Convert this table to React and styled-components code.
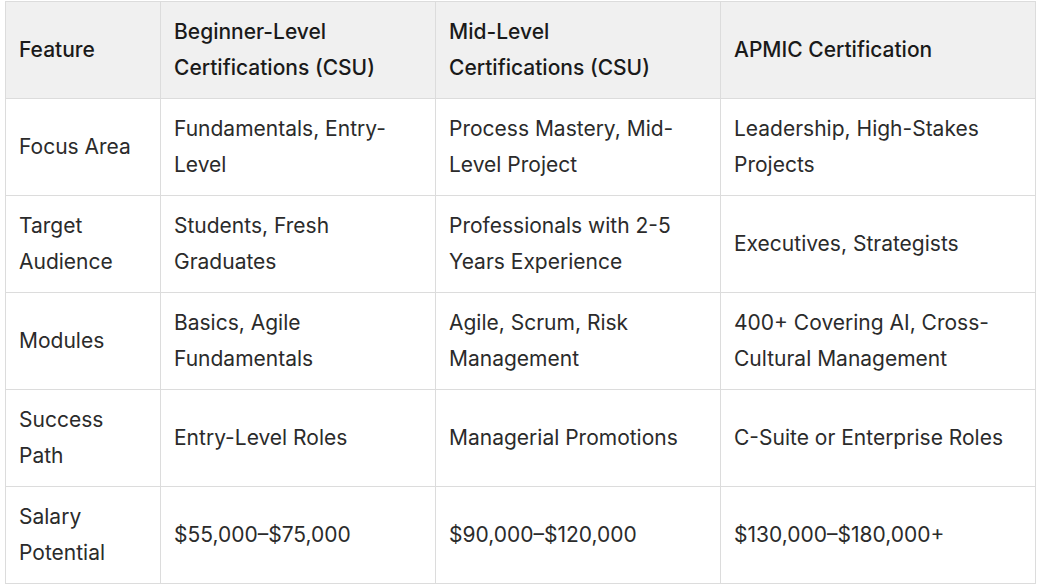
import React from 'react'
import styled, { createGlobalStyle } from 'styled-components'

const GlobalStyle = createGlobalStyle`
  body {
    margin: 0;
    background: #ffffff;
    font-family: Inter, "Liberation Sans", Arial, sans-serif;
    color: #1f1f1f;
  }
`

const Wrap = styled.div`
  padding: 1px 4px 0 5px;
`

const Table = styled.table`
  width: 1030px;
  border-collapse: collapse;
  table-layout: fixed;
  font-size: 21px;
  line-height: 36px;
`

const HeadCell = styled.th`
  background: #f0f0f0;
  border: 1px solid #dcdcdc;
  padding: 12px 50px 12px 13px;
  height: 72px;
  text-align: left;
  font-weight: 500;
  vertical-align: middle;
  color: #1a1a1a;
`

const Cell = styled.td`
  border: 1px solid #dcdcdc;
  padding: 12px 13px;
  height: 72px;
  vertical-align: middle;
  color: #2b2b2b;
`

const columns = [
  { label: 'Feature', width: 155 },
  { label: 'Beginner-Level Certifications (CSU)', width: 275 },
  { label: 'Mid-Level Certifications (CSU)', width: 285 },
  { label: 'APMIC Certification', width: 315 },
]

const rows = [
  ['Focus Area', 'Fundamentals, Entry-Level', 'Process Mastery, Mid-Level Project', 'Leadership, High-Stakes Projects'],
  ['Target Audience', 'Students, Fresh Graduates', 'Professionals with 2-5 Years Experience', 'Executives, Strategists'],
  ['Modules', 'Basics, Agile Fundamentals', 'Agile, Scrum, Risk Management', '400+ Covering AI, Cross-Cultural Management'],
  ['Success Path', 'Entry-Level Roles', 'Managerial Promotions', 'C-Suite or Enterprise Roles'],
  ['Salary Potential', '$55,000–$75,000', '$90,000–$120,000', '$130,000–$180,000+'],
]

export default function App() {
  return (
    <>
      <GlobalStyle />
      <Wrap>
        <Table>
          <colgroup>
            {columns.map(c => <col key={c.label} style={{ width: c.width }} />)}
          </colgroup>
          <thead>
            <tr>
              {columns.map(c => <HeadCell key={c.label}>{c.label}</HeadCell>)}
            </tr>
          </thead>
          <tbody>
            {rows.map(r => (
              <tr key={r[0]}>
                {r.map((v, i) => <Cell key={i}>{v}</Cell>)}
              </tr>
            ))}
          </tbody>
        </Table>
      </Wrap>
    </>
  )
}
